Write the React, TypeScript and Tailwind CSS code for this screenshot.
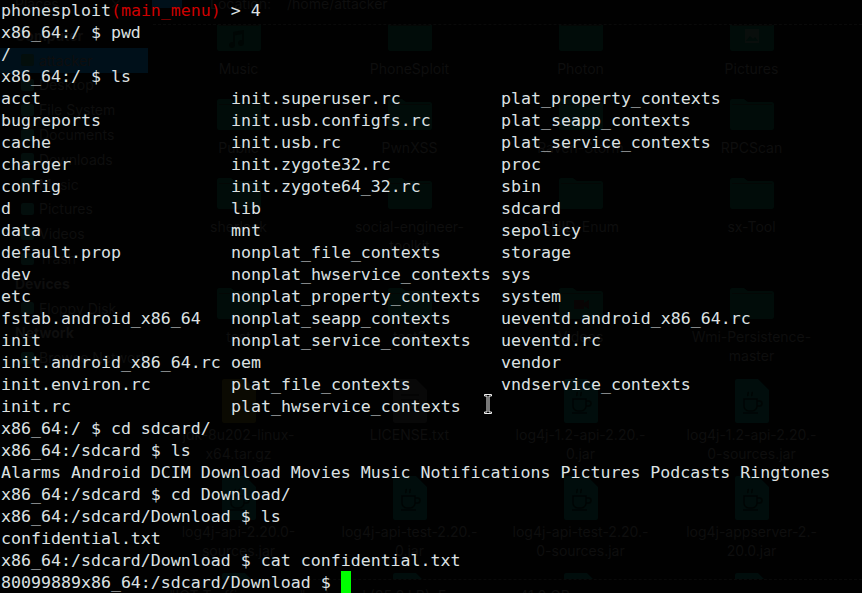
import React from "react";

const SIDEBAR: [string, boolean][] = [
  ["Computer", true],
  ["attacker", false],
  ["Desktop", false],
  ["File System", false],
  ["Documents", false],
  ["Downloads", false],
  ["Music", false],
  ["Pictures", false],
  ["Videos", false],
  ["Trash", false],
  ["Devices", true],
  ["Floppy Disk", false],
  ["Network", true],
  ["Browse Network", false],
];

type Kind = "folder" | "music" | "picture" | "video" | "jar" | "zip" | "text";
type Cell = { kind: Kind; label: string[] };

const ROWS: { h: string; cells: Cell[] }[] = [
  {
    h: "h-[79px]",
    cells: [
      { kind: "music", label: ["Music"] },
      { kind: "folder", label: ["PhoneSploit"] },
      { kind: "folder", label: ["Photon"] },
      { kind: "picture", label: ["Pictures"] },
    ],
  },
  {
    h: "h-[79px]",
    cells: [
      { kind: "folder", label: ["Public"] },
      { kind: "folder", label: ["PwnXSS"] },
      { kind: "folder", label: ["Raven-Storm"] },
      { kind: "folder", label: ["RPCScan"] },
    ],
  },
  {
    h: "h-[110px]",
    cells: [
      { kind: "folder", label: ["sherlock"] },
      { kind: "folder", label: ["social-engineer-", "toolkit"] },
      { kind: "folder", label: ["SUID-Enum"] },
      { kind: "folder", label: ["sx-Tool"] },
    ],
  },
  {
    h: "h-[98px]",
    cells: [
      { kind: "folder", label: ["test"] },
      { kind: "folder", label: ["test2"] },
      { kind: "video", label: ["Videos"] },
      { kind: "folder", label: ["Wmi-Persistence-", "master"] },
    ],
  },
  {
    h: "h-[97px]",
    cells: [
      { kind: "zip", label: ["jdk-8u202-linux-", "x64.tar.gz"] },
      { kind: "text", label: ["LICENSE.txt"] },
      { kind: "jar", label: ["log4j-1.2-api-2.20.-", "0.jar"] },
      { kind: "jar", label: ["log4j-1.2-api-2.20.-", "0-sources.jar"] },
    ],
  },
  {
    h: "h-[97px]",
    cells: [
      { kind: "jar", label: ["log4j-api-2.20.0-", "sources.jar"] },
      { kind: "jar", label: ["log4j-api-test-2.20.-", "0.jar"] },
      { kind: "jar", label: ["log4j-api-test-2.20.-", "0-sources.jar"] },
      { kind: "jar", label: ["log4j-appserver-2.-", "20.0.jar"] },
    ],
  },
  {
    h: "h-[48px]",
    cells: [
      { kind: "jar", label: [] },
      { kind: "jar", label: [] },
      { kind: "jar", label: [] },
      { kind: "jar", label: [] },
    ],
  },
];

const LS: [string, string, string][] = [
  ["acct", "init.superuser.rc", "plat_property_contexts"],
  ["bugreports", "init.usb.configfs.rc", "plat_seapp_contexts"],
  ["cache", "init.usb.rc", "plat_service_contexts"],
  ["charger", "init.zygote32.rc", "proc"],
  ["config", "init.zygote64_32.rc", "sbin"],
  ["d", "lib", "sdcard"],
  ["data", "mnt", "sepolicy"],
  ["default.prop", "nonplat_file_contexts", "storage"],
  ["dev", "nonplat_hwservice_contexts", "sys"],
  ["etc", "nonplat_property_contexts", "system"],
  ["fstab.android_x86_64", "nonplat_seapp_contexts", "ueventd.android_x86_64.rc"],
  ["init", "nonplat_service_contexts", "ueventd.rc"],
  ["init.android_x86_64.rc", "oem", "vendor"],
  ["init.environ.rc", "plat_file_contexts", "vndservice_contexts"],
  ["init.rc", "plat_hwservice_contexts", ""],
];

function FileIcon({ kind }: { kind: Kind }) {
  if (kind === "jar" || kind === "zip" || kind === "text") {
    const fill = kind === "jar" ? "#010d0c" : kind === "zip" ? "#0b0a02" : "#080808";
    const dark = kind === "jar" ? "#000504" : "#030303";
    return (
      <svg width="34" height="44" viewBox="0 0 34 44">
        <path d="M2 0h21l11 11v31a2 2 0 0 1-2 2H2a2 2 0 0 1-2-2V2a2 2 0 0 1 2-2z" fill={fill} />
        {kind === "jar" && (
          <g fill="none" stroke={dark} strokeWidth="1.5">
            <path d="M9 20h13v7a5 5 0 0 1-5 5h-3a5 5 0 0 1-5-5z" />
            <path d="M22 22h2.5a2.5 2.5 0 0 1 0 5H22M8 34h15" />
            <path d="M13 17c-1-2 1-2 0-4M17 17c-1-2 1-2 0-4" />
          </g>
        )}
        {kind === "text" && (
          <path d="M8 16h18M8 21h18M8 26h18M8 31h12" stroke={dark} strokeWidth="1.5" />
        )}
      </svg>
    );
  }
  return (
    <svg width="44" height="31" viewBox="0 0 44 31">
      <path
        d="M2 0h12l4 3h24a2 2 0 0 1 2 2v24a2 2 0 0 1-2 2H2a2 2 0 0 1-2-2V2a2 2 0 0 1 2-2z"
        fill="#010c09"
      />
      <path d="M2 5h40v1H2z" fill="#040705" />
      {kind === "music" && (
        <path d="M16 12l11-2v13a3 3 0 1 1-2-2.8V14l-7 1.3V25a3 3 0 1 1-2-2.8z" fill="#000604" />
      )}
      {kind === "picture" && (
        <g>
          <rect x="15" y="9" width="14" height="14" fill="#090e0c" />
          <path d="M16 21l4-5 3 3 2-2 3 4z" fill="#010c09" />
        </g>
      )}
      {kind === "video" && <path d="M15 12h10v9H15zM25 15l5-3v9l-5-3z" fill="#080404" />}
    </svg>
  );
}

function IBeam() {
  return (
    <svg width="8" height="20" viewBox="0 0 8 20" className="absolute top-[394px] left-[484px]">
      <path
        d="M0.5 0.5h7v1.5H5v16h2.5v1.5h-7V18H3V2H0.5z"
        fill="#000000"
        stroke="#f0f0f0"
        strokeWidth="1"
      />
    </svg>
  );
}

function Background() {
  return (
    <div className="absolute inset-0 flex flex-col overflow-hidden text-[14px] text-[#0e0e0e] [font-family:'Inter',sans-serif]">
      <div className="flex h-[24px] shrink-0 items-start leading-[8px]">
        <span className="w-[110px] pl-[15px]">Places</span>
        <span className="w-[42px] text-[#0a0a0a]">✕</span>
        <span className="h-[8px] w-[30px] bg-[#00101a]" />
        <span className="w-[28px]" />
        <span className="w-[77px]">Location:</span>
        <span>/home/attacker</span>
      </div>
      <div className="flex min-h-0 flex-1">
        <div className="-mt-px flex w-[148px] shrink-0 flex-col">
          {SIDEBAR.map(([name, heading]) => (
            <div
              key={name}
              className={`flex h-[24.8px] shrink-0 items-center gap-[5px] ${
                heading ? "pl-[15px] font-bold" : "pl-[21px]"
              } ${name === "attacker" ? "bg-[#00101a]" : ""}`}
            >
              {!heading && <span className="h-[12px] w-[13px] shrink-0 rounded-[2px] bg-[#030e0c]" />}
              <span className="whitespace-nowrap">{name}</span>
            </div>
          ))}
        </div>
        <div className="ml-[5px] flex min-w-0 flex-1 flex-col">
          <div className="h-[556px] shrink-0 overflow-hidden border-y border-dashed border-[#0a0a0a]">
            <div className="-mt-[14px] flex flex-col">
              {ROWS.map((row, i) => (
                <div key={i} className={`flex shrink-0 ${row.h}`}>
                  {row.cells.map((cell, j) => (
                    <div key={j} className="flex w-[171px] shrink-0 flex-col items-center">
                      <div className="flex h-[48px] items-center justify-center">
                        <FileIcon kind={cell.kind} />
                      </div>
                      <div className="text-center leading-[19px] whitespace-nowrap">
                        {cell.label.map((l) => (
                          <div key={l}>{l}</div>
                        ))}
                      </div>
                    </div>
                  ))}
                </div>
              ))}
            </div>
          </div>
          <div className="pt-[6px] pl-[16px] leading-[19px] whitespace-nowrap">
            "IOT Traffic.pcapng" selected (25.2 kB), Free space: 41.0 GB
          </div>
        </div>
      </div>
    </div>
  );
}

export default function App() {
  return (
    <div className="relative h-[593px] w-[862px] overflow-hidden bg-[#010101]">
      <Background />
      <div className="absolute inset-x-0 top-0 pl-[1px] text-[16.6px] leading-[22px] whitespace-pre text-[#dde1e3] [font-family:'DejaVu_Sans_Mono',monospace]">
        <div>
          phonesploit<span className="text-[#cc0000]">(main_menu)</span> &gt; 4
        </div>
        <div>x86_64:/ $ pwd</div>
        <div>/</div>
        <div>x86_64:/ $ ls</div>
        <div className="grid grid-cols-[230px_270px_1fr]">
          {LS.flat().map((t, i) => (
            <div key={i} className="h-[22px]">
              {t}
            </div>
          ))}
        </div>
        <div>x86_64:/ $ cd sdcard/</div>
        <div>x86_64:/sdcard $ ls</div>
        <div>Alarms Android DCIM Download Movies Music Notifications Pictures Podcasts Ringtones</div>
        <div>x86_64:/sdcard $ cd Download/</div>
        <div>x86_64:/sdcard/Download $ ls</div>
        <div>confidential.txt</div>
        <div>x86_64:/sdcard/Download $ cat confidential.txt</div>
        <div className="flex items-start">
          <span>80099889x86_64:/sdcard/Download $ </span>
          <span className="-mt-px inline-block h-[22px] w-[10px] bg-[#00ff00]" />
        </div>
      </div>
      <IBeam />
    </div>
  );
}
